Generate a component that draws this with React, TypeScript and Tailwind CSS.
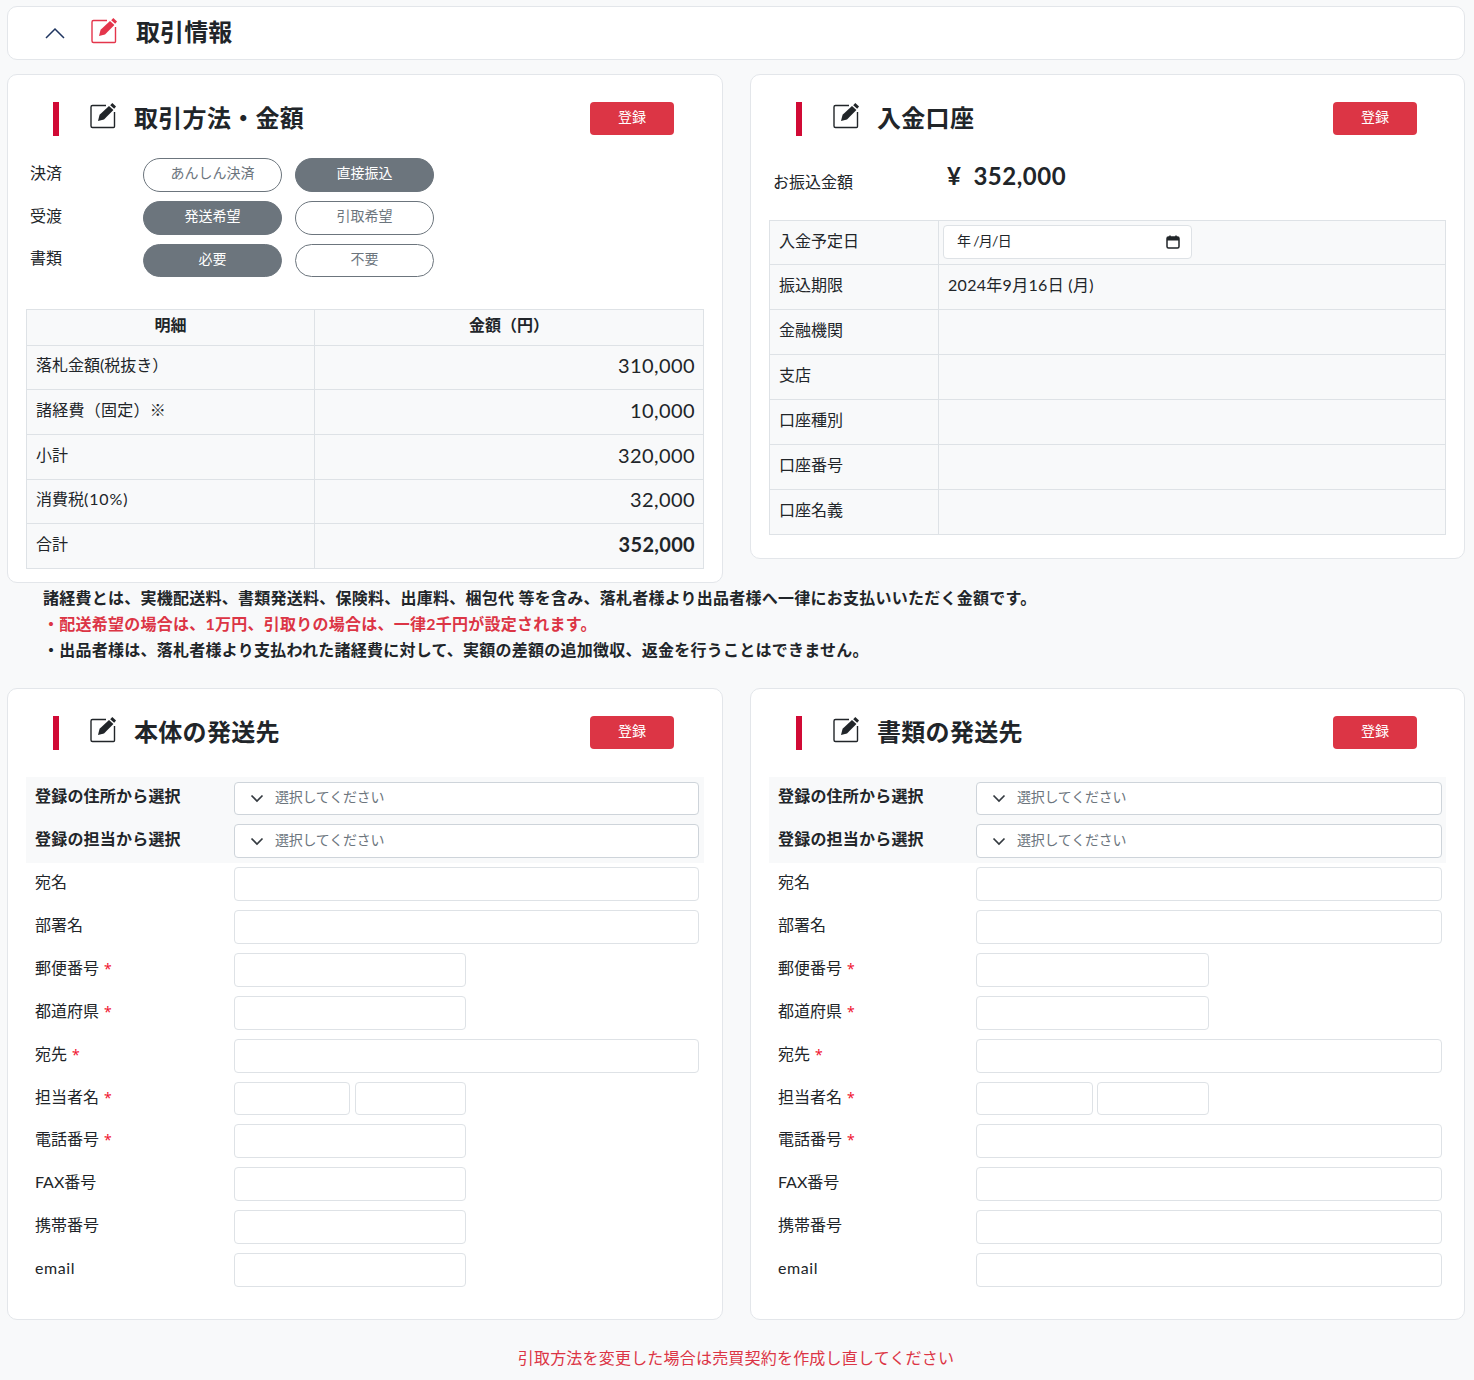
const font = "font-['Lato','Noto_Sans_CJK_JP',sans-serif]";

function EditIcon({ color = "#212529" }: { color?: string }) {
  return (
    <svg width="27" height="27" viewBox="0 0 27 27" fill="none" className="shrink-0">
      <path d="M16 3.5H2.5A1.5 1.5 0 0 0 1 5v19a1.5 1.5 0 0 0 1.5 1.5h21a1 1 0 0 0 1-1V10" stroke={color} strokeWidth="1.4" />
      <path d="M8 19l1.6-6.2 9.4-8.8 4.4 3.9-9.4 9.5z" fill={color} />
      <path d="M20.2 3.2L22.3 1 26 4.6 24.2 6.8z" fill={color} />
    </svg>
  );
}

function CardHeader({ title, wide }: { title: string; wide?: boolean }) {
  return (
    <div className="flex h-[34px] items-center pl-[45px]">
      <div className="h-[34px] w-[6px] bg-[#d10a35]" />
      <div className="ml-[31px] mt-[-7px]">
        <EditIcon />
      </div>
      <h2 className="ml-[17px] mt-[-2px] text-[24px] leading-[34px] font-bold tracking-[0.3px] text-[#212529]">{title}</h2>
      <button
        className={
          wide
            ? "mr-[47px] ml-auto h-[33px] w-[84px] self-start rounded-[4px] bg-[#dc3545] pb-[4px] text-[14px] text-white"
            : "mr-[48px] ml-auto h-[33px] w-[84px] self-start rounded-[4px] bg-[#dc3545] pb-[4px] text-[14px] text-white"
        }
      >
        登録
      </button>
    </div>
  );
}

function Pill({ label, active, short }: { label: string; active?: boolean; short?: boolean }) {
  return (
    <div
      className={`flex w-[139px] items-center justify-center rounded-full border border-[#6c757d] pb-[5px] text-[14px] ${short ? "h-[33px]" : "h-[34px]"} ${
        active ? "bg-[#6c757d] text-white" : "bg-white text-[#6c757d]"
      }`}
    >
      {label}
    </div>
  );
}

function ChoiceRow({ label, left, right, leftActive, short }: { label: string; left: string; right: string; leftActive: boolean; short?: boolean }) {
  return (
    <div className="mb-[9px] flex items-center">
      <div className={`w-[113px] text-[16px] text-[#212529] ${short ? "mt-[-6px]" : "mt-[-4px]"}`}>{label}</div>
      <Pill label={left} active={leftActive} short={short} />
      <div className="w-[13px]" />
      <Pill label={right} active={!leftActive} short={short} />
    </div>
  );
}

const amountRows = [
  { label: "落札金額(税抜き）", value: "310,000", h: "h-[44px]" },
  { label: "諸経費（固定）※", value: "10,000", h: "h-[45px]", track: "tracking-[0.25px]" },
  { label: "小計", value: "320,000", h: "h-[45px]" },
  { label: "消費税", extra: "(10%)", value: "32,000", h: "h-[44px]" },
  { label: "合計", value: "352,000", h: "h-[45px]", bold: true },
];

function AmountTable() {
  return (
    <div className="mx-[18px] mt-[32px] border border-b-0 border-[#dee2e6] bg-[#f8f9fa] text-[#212529]">
      <div className="flex h-[36px] border-b border-[#dee2e6] text-[16px] font-bold">
        <div className="flex w-[288px] items-center justify-center border-r border-[#dee2e6] pb-[6px]">明細</div>
        <div className="flex flex-1 items-center justify-center pb-[6px]">金額（円）</div>
      </div>
      {amountRows.map((r) => (
        <div key={r.label} className={`flex border-b border-[#dee2e6] ${r.h}`}>
          <div className={`flex w-[288px] items-center border-r border-[#dee2e6] pb-[5px] pl-[9px] text-[16px] ${r.track ?? ""}`}>
            {r.label}
            {r.extra && <span className="tracking-[0.9px]">{r.extra}</span>}
          </div>
          <div
            className={
              r.bold
                ? "flex flex-1 items-center justify-end pr-[8px] pb-[5px] text-[20px] font-bold tracking-[0.3px]"
                : "flex flex-1 items-center justify-end pr-[8px] pb-[5px] text-[20px] tracking-[0.4px]"
            }
          >
            {r.value}
          </div>
        </div>
      ))}
    </div>
  );
}

const bankRows = ["金融機関", "支店", "口座種別", "口座番号", "口座名義"];

function BankTable() {
  return (
    <div className="mx-[18px] mt-[26px] border border-b-0 border-[#dee2e6] bg-[#f8f9fa] text-[16px] text-[#212529]">
      <div className="flex h-[44px] border-b border-[#dee2e6]">
        <div className="flex w-[169px] items-center border-r border-[#dee2e6] pb-[4px] pl-[9px]">入金予定日</div>
        <div className="flex flex-1 items-center pb-[2px] pl-[4px]">
          <div className="flex h-[34px] w-[249px] items-center justify-between rounded-[4px] border border-[#dee2e6] bg-white pr-[11px] pl-[13px] text-[14px]">
            <span className="pb-[2px] tracking-[-0.7px]">年 /月/日</span>
            <svg width="14" height="14" viewBox="0 0 14 14" fill="none">
              <rect x="1" y="2" width="12" height="11" rx="1.5" stroke="#212529" strokeWidth="1.5" />
              <rect x="1" y="2" width="12" height="3.5" fill="#212529" />
              <path d="M4 0.5v2M10 0.5v2" stroke="#212529" strokeWidth="1.5" />
            </svg>
          </div>
        </div>
      </div>
      <div className="flex h-[45px] border-b border-[#dee2e6]">
        <div className="flex w-[169px] items-center border-r border-[#dee2e6] pb-[4px] pl-[9px]">振込期限</div>
        <div className="flex flex-1 items-center pb-[4px] pl-[9px] tracking-[0.3px]">2024年9月16日 (月)</div>
      </div>
      {bankRows.map((label) => (
        <div key={label} className="flex h-[45px] border-b border-[#dee2e6]">
          <div className="flex w-[169px] items-center border-r border-[#dee2e6] pb-[4px] pl-[9px]">{label}</div>
          <div className="flex-1" />
        </div>
      ))}
    </div>
  );
}

function SelectRow({ label, wide, first }: { label: string; wide?: boolean; first?: boolean }) {
  return (
    <div className={`flex items-center ${first ? "h-[33px]" : "mt-[9px] h-[34px]"} ${wide ? "pr-[4px]" : "pr-[5px]"} pl-[9px]`}>
      <div className={`text-[16px] font-bold tracking-[0.2px] text-[#212529] ${first ? "mt-[-6px]" : "mt-[-5px]"} ${wide ? "w-[198px]" : "w-[199px]"}`}>{label}</div>
      <div className="flex h-full flex-1 items-center rounded-[4px] border border-[#ced4da] bg-white pl-[15px] text-[14px] text-[#6c757d]">
        <svg width="14" height="9" viewBox="0 0 14 9" fill="none" className="mr-[11px]">
          <path d="M1.5 1.5L7 7l5.5-5.5" stroke="#343a40" strokeWidth="1.7" />
        </svg>
        <span className="pb-[4px] tracking-[-0.25px]">選択してください</span>
      </div>
    </div>
  );
}

function FieldRow({ label, required, kind, wide }: { label: string; required?: boolean; kind: "full" | "half" | "pair"; wide?: boolean }) {
  return (
    <div className={`flex h-[42.85px] ${wide ? "pr-[4px]" : "pr-[5px]"} pl-[9px]`}>
      <div className={`text-[16px] leading-[30px] text-[#212529] ${wide ? "w-[198px]" : "w-[199px]"}`}>
        <span className={label === "email" ? "tracking-[0.6px]" : ""}>{label}</span>
        {required && <span className="ml-[5px] font-['Noto_Sans',sans-serif] text-[14px] text-[#f0142f]">*</span>}
      </div>
      {kind === "full" && <div className="h-[34px] flex-1 rounded-[4px] border border-[#dee2e6] bg-white" />}
      {kind === "half" && <div className={`h-[34px] rounded-[4px] border border-[#dee2e6] bg-white ${wide ? "w-[233px]" : "w-[232px]"}`} />}
      {kind === "pair" && (
        <div className={`flex ${wide ? "w-[233px] gap-[4px]" : "w-[232px] gap-[5px]"}`}>
          <div className={`h-[33px] rounded-[4px] border border-[#dee2e6] bg-white ${wide ? "w-[117px]" : "w-[116px]"}`} />
          <div className="h-[33px] flex-1 rounded-[4px] border border-[#dee2e6] bg-white" />
        </div>
      )}
    </div>
  );
}

function ShippingCard({ title, wide }: { title: string; wide?: boolean }) {
  const contact = wide ? "full" : "half";
  return (
    <div className="h-[632px] rounded-[10px] border border-[#e3e6ea] bg-white pt-[27px]">
      <CardHeader title={title} wide={wide} />
      <div className="mx-[18px] mt-[27px]">
        <div className="h-[86px] bg-[#f8f9fa] pt-[5px]">
          <SelectRow label="登録の住所から選択" wide={wide} first />
          <SelectRow label="登録の担当から選択" wide={wide} />
        </div>
        <div className="pt-[4.4px]">
          <FieldRow label="宛名" kind="full" wide={wide} />
          <FieldRow label="部署名" kind="full" wide={wide} />
          <FieldRow label="郵便番号" required kind="half" wide={wide} />
          <FieldRow label="都道府県" required kind="half" wide={wide} />
          <FieldRow label="宛先" required kind="full" wide={wide} />
          <FieldRow label="担当者名" required kind="pair" wide={wide} />
          <FieldRow label="電話番号" required kind={contact} wide={wide} />
          <FieldRow label="FAX番号" kind={contact} wide={wide} />
          <FieldRow label="携帯番号" kind={contact} wide={wide} />
          <FieldRow label="email" kind={contact} wide={wide} />
        </div>
      </div>
    </div>
  );
}

export default function App() {
  return (
    <div className={`${font} min-h-[1380px] bg-[#f8f9fa] pt-[6px] pr-[9px] pl-[7px]`}>
      <div className="flex h-[54px] items-center rounded-[10px] border border-[#e3e6ea] bg-white pl-[36px]">
        <svg width="22" height="12" viewBox="0 0 22 12" fill="none">
          <path d="M2 11l9-9 9 9" stroke="#1f3560" strokeWidth="1.5" />
        </svg>
        <div className="ml-[25px] mt-[-5px]">
          <EditIcon color="#e4354b" />
        </div>
        <h1 className="ml-[18px] mt-[-3px] text-[24px] font-bold tracking-[0.1px] text-[#212529]">取引情報</h1>
      </div>

      <div className="mt-[14px] grid grid-cols-[716px_715px] items-start gap-x-[27px]">
        <div className="h-[509px] rounded-[10px] border border-[#e3e6ea] bg-white pt-[27px]">
          <CardHeader title="取引方法・金額" />
          <div className="mt-[22px] pl-[22px]">
            <ChoiceRow label="決済" left="あんしん決済" right="直接振込" leftActive={false} />
            <ChoiceRow label="受渡" left="発送希望" right="引取希望" leftActive={true} />
            <ChoiceRow label="書類" left="必要" right="不要" leftActive={true} short />
          </div>
          <AmountTable />
        </div>
        <div className="h-[485px] rounded-[10px] border border-[#e3e6ea] bg-white pt-[27px]">
          <CardHeader title="入金口座" wide />
          <div className="mt-[22px] flex items-center pl-[22px] text-[#212529]">
            <div className="mt-[12px] w-[174px] text-[16px]">お振込金額</div>
            <div className="text-[24px] leading-[36px] font-bold tracking-[0.5px]">
              ¥<span className="ml-[12px]">352,000</span>
            </div>
          </div>
          <BankTable />
        </div>
      </div>

      <div className="h-[105px] pt-[2px] pl-[36px] text-[16px] leading-[26px] font-bold tracking-[0.25px] text-[#212529]">
        <p>諸経費とは、実機配送料、書類発送料、保険料、出庫料、梱包代 等を含み、落札者様より出品者様へ一律にお支払いいただく金額です。</p>
        <p className="text-[#dc3545]">・配送希望の場合は、1万円、引取りの場合は、一律2千円が設定されます。</p>
        <p>・出品者様は、落札者様より支払われた諸経費に対して、実額の差額の追加徴収、返金を行うことはできません。</p>
      </div>

      <div className="grid grid-cols-[716px_715px] items-start gap-x-[27px]">
        <ShippingCard title="本体の発送先" />
        <ShippingCard title="書類の発送先" wide />
      </div>

      <div className="mt-[26px] text-center text-[16px] leading-[24px] tracking-[0.2px] text-[#dc3545]">引取方法を変更した場合は売買契約を作成し直してください</div>
    </div>
  );
}
